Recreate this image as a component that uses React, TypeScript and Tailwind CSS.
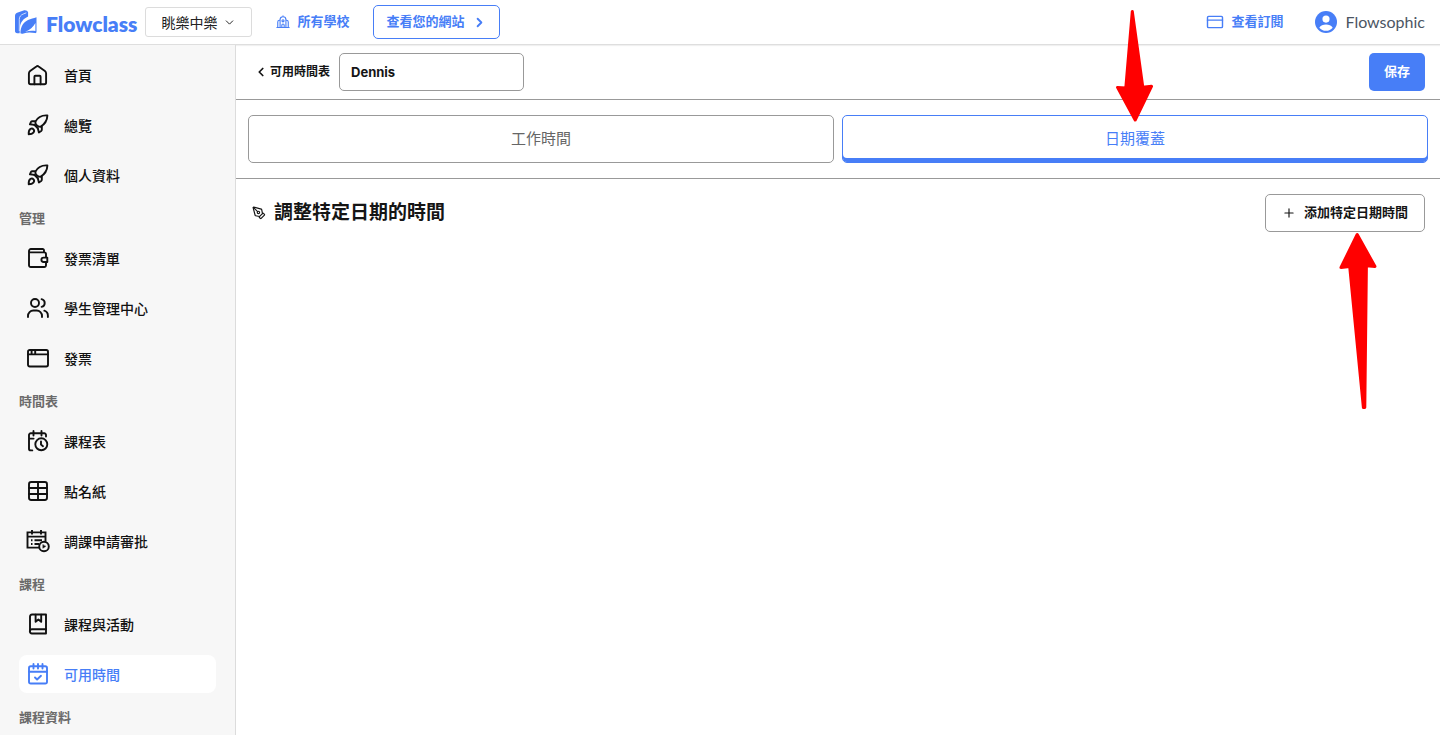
import { useState } from "react";
import type { ReactNode } from "react";
import { ChevronDown, ChevronLeft, ChevronRight, PenTool, Plus } from "lucide-react";
import clsx from "clsx";

function Icon({ children, className = "size-6" }: { children: ReactNode; className?: string }) {
  return (
    <svg
      viewBox="0 0 24 24"
      fill="none"
      stroke="currentColor"
      strokeWidth="1.9"
      strokeLinecap="round"
      strokeLinejoin="round"
      className={clsx("shrink-0", className)}
      aria-hidden="true"
    >
      {children}
    </svg>
  );
}

const HomeIcon = () => (
  <Icon>
    <path d="M2.900 10.400c0-1 .4-1.800 1.200-2.400l6.300-4.600a1.800 1.800 0 0 1 2.200 0L18.900 8c.8.6 1.200 1.400 1.200 2.400v9.200a1.700 1.700 0 0 1-1.700 1.700H4.600a1.700 1.700 0 0 1-1.700-1.700z" />
    <path d="M8.400 21.300v-7.600a.9.9 0 0 1 .9-.9h4.400a.9.9 0 0 1 .9.9v7.600" />
  </Icon>
);

const RocketIcon = () => (
  <Icon>
    <path d="M21.400 2.400C15.500 2 11.700 4.300 9.400 8.600c-.4 2.400 1.800 5.200 5 5.300 4.200-2.500 6.800-6.100 7-11.500z" />
    <path d="M9.400 8.200H6.200a1.400 1.400 0 0 0-1.200.7L3.900 11.300l4.500.6" />
    <path d="M15.800 13.400v3.400c0 .5-.2.900-.6 1.200l-2.300 1.500-1.100-4.300" />
    <path d="M8.300 11.800l3.500 3.400" />
    <path d="M2.700 21.300c-.1-2.300.2-4.300 1.500-5.200 1.100-.8 2.500-.7 3.300.2s.8 2.200-.1 3.300c-.9 1.200-2.600 1.700-4.700 1.700z" />
  </Icon>
);

const WalletIcon = () => (
  <Icon>
    <path d="M3 5v14.200A1.800 1.800 0 0 0 4.800 21h13.400a1.800 1.800 0 0 0 1.800-1.800v-2.600M20 11V8.200a1.800 1.800 0 0 0-1.800-1.800H4.500A1.500 1.500 0 0 1 3 4.900 1.900 1.900 0 0 1 4.900 3h11.700A1.400 1.400 0 0 1 18 4.400v2" />
    <path d="M21.300 11.600h-3.700a2.200 2.200 0 0 0 0 4.400h3.700z" />
  </Icon>
);

const UsersIcon = () => (
  <Icon>
    <circle cx="9" cy="7" r="4" />
    <path d="M2 21v-1.200A5.300 5.300 0 0 1 7.300 14.500h3.400A5.300 5.300 0 0 1 16 19.800V21" />
    <path d="M15.600 3.100a4 4 0 0 1 0 7.800M18.300 14.700a5.200 5.200 0 0 1 3.600 5V21" />
  </Icon>
);

const WindowIcon = () => (
  <Icon>
    <rect x="2" y="4" width="20" height="16.500" rx="1.700" />
    <path d="M2 8.400h20M5.600 4.400v3.600M9.200 4.400v3.600" />
  </Icon>
);

const CalendarClockIcon = () => (
  <Icon>
    <path d="M6.300 21.400H4.700A1.700 1.700 0 0 1 3 19.700V6a1.700 1.700 0 0 1 1.700-1.700h13.600A1.700 1.700 0 0 1 20 6v1.600M3 9.600h4.600M7.500 2v4.500M15.500 2v4.500" />
    <circle cx="15.300" cy="15.300" r="6" />
    <path d="M15 12.400v3.100l2 1.700" />
  </Icon>
);

const TableIcon = () => (
  <Icon>
    <rect x="3" y="3" width="18" height="18" rx="2.200" />
    <path d="M3 9h18M3 15h18M12 3v18" />
  </Icon>
);

const CalendarPlayIcon = () => (
  <Icon>
    <g strokeLinecap="butt" strokeLinejoin="miter">
      <path d="M13 18.600H1.500V3.400h18v9.200M1.500 7.600h18M6 1v4.600M15 1v4.600" />
      <path d="M5 11.300h1.500M8.500 11.300h7.500M5 15h1.500M8.500 15H13" />
      <circle cx="18" cy="17.500" r="4.800" />
    </g>
    <path d="M16.800 15.700v3.600l2.900-1.800z" fill="currentColor" strokeWidth=".4" />
  </Icon>
);

const BookIcon = () => (
  <Icon>
    <path d="M20 17.200V2.500H6.200A2.300 2.300 0 0 0 4 4.800v14.300" />
    <path d="M20 17.200H6a2.100 2.100 0 0 0 0 4.300h14z" />
    <path d="M9.600 2.700v7.100l2.800-2.300 2.800 2.300V2.700" />
  </Icon>
);

const CalendarCheckIcon = () => (
  <Icon>
    <rect x="3" y="4.300" width="18" height="17.200" rx="1.800" />
    <path d="M3 9.800h18M7.500 2v4.500M12 2v4.500M16.500 2v4.500M9 15.500l2.100 2 3.900-3.700" />
  </Icon>
);

interface NavItem {
  label: string;
  icon: () => ReactNode;
}

const NAV: { title?: string; items: NavItem[] }[] = [
  {
    items: [
      { label: "首頁", icon: HomeIcon },
      { label: "總覽", icon: RocketIcon },
      { label: "個人資料", icon: RocketIcon },
    ],
  },
  {
    title: "管理",
    items: [
      { label: "發票清單", icon: WalletIcon },
      { label: "學生管理中心", icon: UsersIcon },
      { label: "發票", icon: WindowIcon },
    ],
  },
  {
    title: "時間表",
    items: [
      { label: "課程表", icon: CalendarClockIcon },
      { label: "點名紙", icon: TableIcon },
      { label: "調課申請審批", icon: CalendarPlayIcon },
    ],
  },
  {
    title: "課程",
    items: [
      { label: "課程與活動", icon: BookIcon },
      { label: "可用時間", icon: CalendarCheckIcon },
    ],
  },
  { title: "課程資料", items: [] },
];

function Header() {
  return (
    <header className="flex h-[45px] shrink-0 items-center justify-between border-b border-[#dedede] px-[15px] shadow-[0_1px_1px_rgba(0,0,0,0.06)]">
      <div className="flex items-center">
        <a href="#home" className="flex items-center gap-[9px] text-[#477ef7]">
          <svg viewBox="0 0 22 24" className="h-6 w-[22px]" fill="currentColor" aria-hidden="true">
            <path d="M0 6C0 4 1 3 2.800 2.400L8.500.4c2.200-.6 4 .2 4.600 1.800v4.300c-5 2.200-7.700 6-8.100 10.500l-.4 6.200H2.200C.8 23.200 0 22.400 0 21z" />
            <path d="M4.300 21V9.500c0-3 1.500-4.500 4-5.500l3-1.200" fill="none" stroke="#fff" strokeWidth=".7" />
            <path d="M21.500 7.200v14.600c0 .9-.6 1.500-1.400 1.300-3.600-.7-8.100-1-11.600.4-1.300.4-2.400.3-3.100-.2.2-7.400 3.200-11.200 7.600-13.400 2.800-1.300 5.700-1.600 8.500-2.700zm-1.100 13.900V13c-2.100 4.200-5.400 6.800-10.400 9 3.600-1.200 6.900-1.400 10.400-.9z" fillRule="evenodd" />
          </svg>
          <span className="pt-1 font-['Lato','Noto_Sans_CJK_TC',sans-serif] text-[21px] leading-6 font-extrabold">Flowclass</span>
        </a>
        <button type="button" className="ml-2 flex h-[30px] items-center gap-1.5 rounded-[3px] border border-[#dcdcdc] px-[15px] text-[14px] text-[#222]">
          眺樂中樂
          <ChevronDown size={13} strokeWidth={1.8} />
        </button>
        <a href="#schools" className="ml-6 flex items-center gap-[7px] text-[13px] font-semibold text-[#477ef7]">
          <Icon className="size-[14px]">
            <path d="M1.500 21.500h21M3 21V12a3 3 0 0 1 3-3M21 21V12a3 3 0 0 0-3-3M7 21V8a5 5 0 0 1 10 0V21M12 3V1.500M10 21v-3.500a2 2 0 0 1 4 0V21" />
            <circle cx="12" cy="10" r="1.800" />
          </Icon>
          所有學校
        </a>
        <a href="#website" className="ml-6 flex h-[34px] items-center gap-2 rounded-[5px] border border-[#477ef7] px-3 text-[13px] font-semibold text-[#477ef7]">
          查看您的網站
          <ChevronRight size={15} strokeWidth={3} />
        </a>
      </div>
      <div className="flex items-center">
        <a href="#subscription" className="flex items-center gap-[7px] text-[13px] font-semibold text-[#477ef7]">
          <Icon className="size-[18px]">
            <rect x="2" y="4.500" width="20" height="15" rx="1.500" />
            <path d="M2 9.500h20" />
          </Icon>
          查看訂閱
        </a>
        <button type="button" className="ml-8 flex items-center gap-2 text-[#4b5563]">
          <svg viewBox="0 0 24 24" className="size-[22px]" aria-hidden="true">
            <circle cx="12" cy="12" r="12" fill="#477ef7" />
            <circle cx="12" cy="8.800" r="3.900" fill="#fff" />
            <path d="M4.700 18.200c1.300-2.200 4.300-3.400 7.300-3.400s6 1.200 7.300 3.400A9.500 9.500 0 0 1 12 21.600a9.500 9.500 0 0 1-7.300-3.400z" fill="#fff" />
          </svg>
          <span className="font-['Lato','Noto_Sans_CJK_TC',sans-serif] text-[16px]">Flowsophic</span>
        </button>
      </div>
    </header>
  );
}

function Sidebar() {
  const [active, setActive] = useState("可用時間");

  return (
    <nav className="flex w-[236px] shrink-0 flex-col gap-3 overflow-hidden border-r border-[#dcdcdc] bg-[#f7f7f7] px-[19px] pt-[11px]">
      {NAV.map((group, i) => (
        <div key={i} className="flex flex-col gap-3">
          {group.title && (
            <h2 className="mt-1 text-[13px] leading-[17px] font-semibold text-[#6b6b6b]">{group.title}</h2>
          )}
          {group.items.map(({ label, icon: ItemIcon }) => (
            <button
              key={label}
              type="button"
              onClick={() => setActive(label)}
              className={clsx(
                "flex h-[38px] shrink-0 items-center gap-[14px] rounded-lg px-[7px] text-[14px] font-medium",
                active === label ? "bg-white text-[#477ef7]" : "text-[#111]"
              )}
            >
              <ItemIcon />
              {label}
            </button>
          ))}
        </div>
      ))}
    </nav>
  );
}

export default function App() {
  const [name, setName] = useState("Dennis");

  return (
    <div className="flex h-screen flex-col overflow-hidden bg-white font-['Inter','Noto_Sans_CJK_TC',sans-serif] text-[#151515]">
      <Header />
      <div className="flex min-h-0 flex-1">
        <Sidebar />
        <main className="min-w-0 flex-1">
          {/* Title bar */}
          <div className="flex items-center justify-between border-b border-[#999] py-2 pr-[15px] pl-[18px]">
            <div className="flex items-center gap-[9px]">
              <a href="#schedules" className="flex items-center gap-0.5 text-[12px] font-semibold">
                <ChevronLeft size={14} strokeWidth={3} />
                可用時間表
              </a>
              <input
                type="text"
                aria-label="名稱"
                value={name}
                onChange={(e) => setName(e.target.value)}
                className="h-[38px] w-[185px] rounded-[5px] border border-[#999] px-[11px] text-[13px] font-bold outline-none"
              />
            </div>
            <button type="button" className="h-[38px] rounded-[5px] bg-[#477ef7] px-[15px] text-[13px] font-bold text-white">
              保存
            </button>
          </div>

          {/* Tabs */}
          <div className="grid grid-cols-2 gap-2 border-b border-[#999] px-3 py-[15px]">
            <button type="button" className="h-12 rounded-[5px] border border-[#999] text-[15px] text-[#666]">
              工作時間
            </button>
            <div className="relative">
              <button type="button" className="h-12 w-full rounded-[5px] border border-[#477ef7] text-[15px] text-[#477ef7] shadow-[inset_0_-4px_0_#477ef7]">
                日期覆蓋
              </button>
              <svg viewBox="0 0 38 114" className="pointer-events-none absolute -top-[106px] left-1/2 h-[114px] w-[38px] -translate-x-1/2" aria-hidden="true">
                <path d="M16.300 2.500L9.800 79L1.500 78.400L19.200 111L35.500 77.300L26.800 78.200Z" fill="#f00" stroke="#f00" strokeWidth="3" strokeLinejoin="round" />
              </svg>
            </div>
          </div>

          {/* Date overrides */}
          <div className="flex items-center justify-between py-[15px] pr-[15px] pl-4">
            <h1 className="flex items-center gap-2 text-[19px] font-bold">
              <PenTool size={14} strokeWidth={2} />
              調整特定日期的時間
            </h1>
            <div className="relative">
              <button type="button" className="flex h-[38px] items-center gap-2 rounded-[5px] border border-[#999] px-4 text-[13px] font-semibold">
                <Plus size={14} strokeWidth={2} />
                添加特定日期時間
              </button>
              <svg viewBox="0 0 38 178" className="pointer-events-none absolute top-full right-12 h-[178px] w-[38px]" aria-hidden="true">
                <path d="M18.200 2.500L2 35.500L10.700 34.500L24.400 175.500H25.800L27.400 33.800L36 34.500Z" fill="#f00" stroke="#f00" strokeWidth="3" strokeLinejoin="round" />
              </svg>
            </div>
          </div>
        </main>
      </div>
    </div>
  );
}
